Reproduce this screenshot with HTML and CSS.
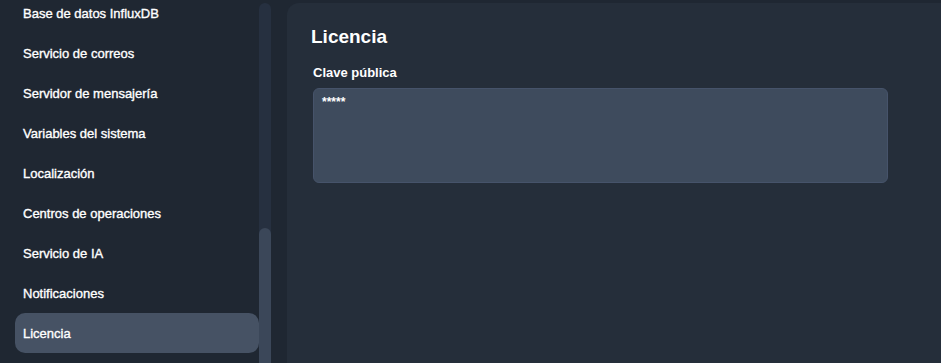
FILE: index.html
```html
<!DOCTYPE html>
<html lang="es">
<head>
<meta charset="utf-8">
<title>Licencia</title>
<link rel="stylesheet" href="styles.css">
</head>
<body>
<div class="app">
  <aside class="sidebar">
    <nav class="menu">
      <div class="item">Base de datos InfluxDB</div>
      <div class="item">Servicio de correos</div>
      <div class="item">Servidor de mensajería</div>
      <div class="item">Variables del sistema</div>
      <div class="item">Localización</div>
      <div class="item">Centros de operaciones</div>
      <div class="item">Servicio de IA</div>
      <div class="item">Notificaciones</div>
      <div class="item active">Licencia</div>
    </nav>
    <div class="scrolltrack">
      <div class="thumb"></div>
    </div>
  </aside>
  <main class="panel">
    <h1 class="title">Licencia</h1>
    <div class="field">
      <label class="label">Clave pública</label>
      <div class="textarea">*****</div>
    </div>
  </main>
</div>
</body>
</html>
```

FILE: styles.css
```css
html, body {
  margin: 0;
  padding: 0;
  height: 100%;
  background: #1f2732;
  font-family: "Liberation Sans", Arial, sans-serif;
  color: #ffffff;
  overflow: hidden;
}
.app {
  display: flex;
  height: 363px;
  gap: 16px;
}
.sidebar {
  display: flex;
  width: 271px;
  flex: none;
}
.menu {
  flex: 1;
  padding: 0 0 0 15px;
  display: flex;
  flex-direction: column;
  margin-top: -7px;
}
.item {
  height: 40px;
  line-height: 41px;
  padding-left: 8px;
  font-size: 13px;
  font-weight: 400;
  -webkit-text-stroke: 0.35px #ffffff;
  border-radius: 10px;
  white-space: nowrap;
}
.item.active {
  background: #465264;
}
.scrolltrack {
  width: 12px;
  margin-top: 3px;
  background: #263040;
  border-radius: 6px 6px 0 0;
  display: flex;
  flex-direction: column;
  justify-content: flex-end;
}
.thumb {
  height: 135px;
  background: #3b4759;
  border-radius: 6px 6px 0 0;
}
.panel {
  flex: 1;
  margin-top: 3px;
  background: #252e3a;
  border-radius: 12px 0 0 0;
  padding: 22px 24px;
}
.title {
  margin: 0 0 16px 0;
  font-size: 19px;
  font-weight: bold;
  line-height: 24px;
}
.field {
  padding-left: 2px;
}
.label {
  display: block;
  font-size: 13px;
  font-weight: bold;
  line-height: 16px;
  margin-bottom: 7px;
}
.textarea {
  width: 557px;
  height: 81px;
  padding: 6px 8px;
  background: #3e4b5d;
  border: 1px solid #46536a;
  border-radius: 6px;
  font-size: 12px;
  font-weight: bold;
  line-height: 14px;
}
```
